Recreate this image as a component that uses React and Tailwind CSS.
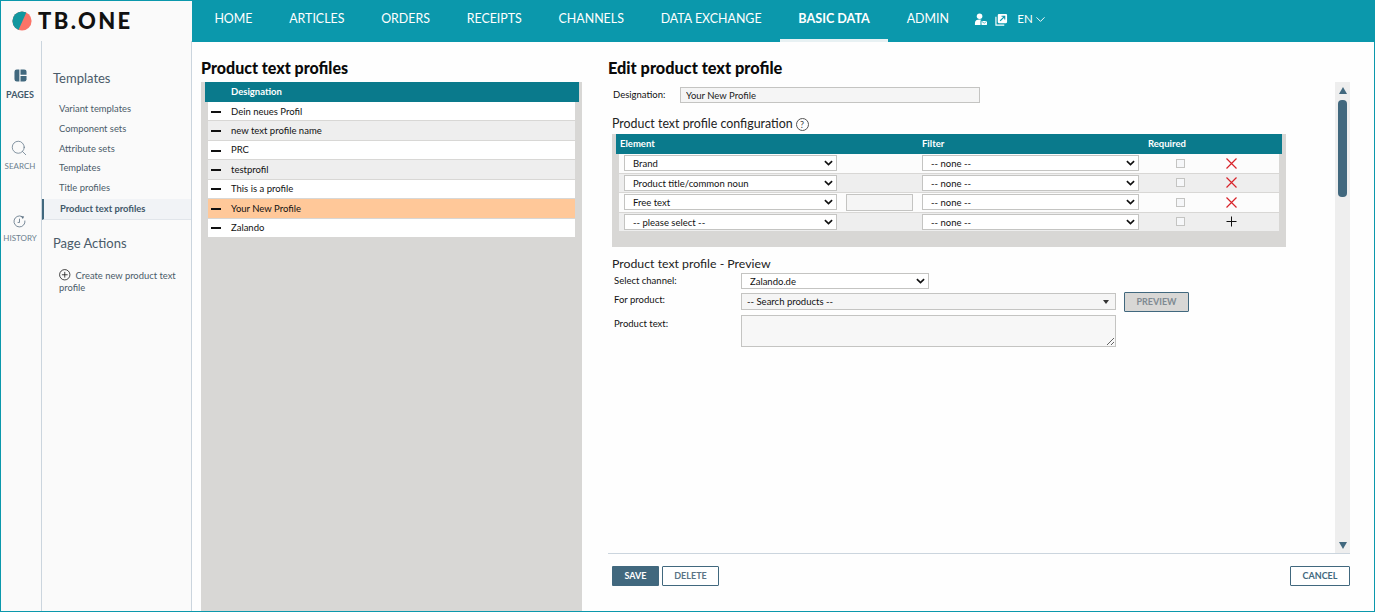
import React from "react";
import { Search, ChevronDown } from "lucide-react";

const FONT = "font-['Lato','Noto_Sans',sans-serif]";

function Chevron({ className = "" }) {
  return (
    <svg viewBox="0 0 12 8" className={"absolute pointer-events-none w-[9px] h-[6px] " + className}>
      <path d="M1.2 1.5 L6 6 L10.8 1.5" fill="none" stroke="#111" strokeWidth="2.2" />
    </svg>
  );
}

function Sel({ value, className = "", bg = "bg-white" }) {
  return (
    <div className={"relative " + className}>
      <select
        defaultValue={value}
        className={"block appearance-none w-full h-full border border-[#c4c4c2] outline-none pl-[8px] pr-4 pt-[1px] text-[9.5px] text-[#111] rounded-none " + bg + " " + FONT}
      >
        <option>{value}</option>
      </select>
      <Chevron className="right-[4px] top-[5px]" />
    </div>
  );
}

const navItems = ["HOME", "ARTICLES", "ORDERS", "RECEIPTS", "CHANNELS", "DATA EXCHANGE", "BASIC DATA", "ADMIN"];
const sideLinks = ["Variant templates", "Component sets", "Attribute sets", "Templates", "Title profiles"];
const profiles = ["Dein neues Profil", "new text profile name", "PRC", "testprofil", "This is a profile", "Your New Profile", "Zalando"];
const configRows = [
  { el: "Brand", act: "x" },
  { el: "Product title/common noun", act: "x" },
  { el: "Free text", act: "x", free: true },
  { el: "-- please select --", act: "plus" },
];

function Header() {
  return (
    <div className="flex h-[40px] shrink-0">
      <div className="w-[191px] shrink-0 bg-[#fafafa] border-b border-[#cbd5de] flex items-center pl-[11px] gap-[6px] h-[41px]">
        <svg viewBox="0 0 20 20" className="w-[20px] h-[20px]">
          <defs>
            <clipPath id="lc"><circle cx="10" cy="10" r="9.6" /></clipPath>
          </defs>
          <g clipPath="url(#lc)">
            <rect width="20" height="20" fill="#fb7468" />
            <path d="M0 0 H15 L6 20 H0 Z" fill="#12979f" />
          </g>
        </svg>
        <span className="text-[22px] leading-none font-black tracking-[2.4px] text-[#111] font-['Lato',sans-serif]">TB.ONE</span>
      </div>
      <nav className={"flex-1 bg-[#0b98ac] h-[41px] flex pl-[4px] text-white " + FONT}>
        {navItems.map((n) => {
          const active = n === "BASIC DATA";
          return (
            <div
              key={n}
              className={
                "px-[18.4px] flex items-center h-[41px] pb-[2px] border-b-[3px] " +
                (active ? "text-[12.6px] font-bold border-[#e8f1f3]" : "text-[12.4px] border-transparent")
              }
            >
              {n}
            </div>
          );
        })}
        <div className="flex items-center gap-[8px] ml-[7px] pb-[5px]">
          <svg viewBox="0 0 14 14" className="w-[13px] h-[13px]" fill="white">
            <circle cx="6" cy="3.5" r="3" />
            <path d="M1 11 C1 8 3 7 6 7 C7 7 8 7.3 8 7.5 L7 8 V13 H1 Z" />
            <rect x="8" y="8.5" width="6" height="4.5" rx="0.5" />
            <path d="M8.3 9 L11 11 L13.7 9" stroke="#0b98ac" strokeWidth="0.7" fill="none" />
          </svg>
          <svg viewBox="0 0 14 14" className="w-[13px] h-[13px]" fill="none" stroke="white">
            <rect x="3" y="1" width="10" height="10" rx="1.2" fill="white" stroke="none" />
            <path d="M1 4 V13 H10" strokeWidth="1.2" />
            <path d="M5.5 8.5 L10.5 3.5 M7 3.5 H10.5 V7" stroke="#0b98ac" strokeWidth="1.2" />
          </svg>
          <span className="text-[11.5px] flex items-center gap-[0px] ml-[1px]">
            EN <ChevronDown size={15} strokeWidth={1.5} />
          </span>
        </div>
      </nav>
    </div>
  );
}

function IconRail() {
  return (
    <div className={"w-[41px] shrink-0 bg-[#fafafa] border-r border-[#cbd5de] flex flex-col items-center pt-[28px] pr-[2px] " + FONT}>
      <svg viewBox="0 0 14 14" className="w-[13px] h-[13px]">
        <path d="M3 0.5 H5.8 V13.5 H3 A2.5 2.5 0 0 1 0.5 11 V3 A2.5 2.5 0 0 1 3 0.5 Z" fill="#41687e" />
        <path d="M7 0.5 H11 A2.5 2.5 0 0 1 13.5 3 V6.3 H7 Z" fill="#41687e" />
        <path d="M7 7.5 H13.5 V11 A2.5 2.5 0 0 1 11 13.5 H7 Z" fill="#41687e" />
      </svg>
      <span className="text-[9px] font-bold text-[#41586a] mt-[7px] leading-[11px]">PAGES</span>
      <Search size={18} strokeWidth={1} className="text-[#5f7485] mt-[39px] ml-[-2px]" />
      <span className="text-[8px] text-[#6b7f8e] mt-[4px] leading-[10px]">SEARCH</span>
      <svg viewBox="0 0 14 14" className="w-[13px] h-[13px] mt-[44px] ml-[-1px]" fill="none" stroke="#5f7485" strokeWidth="0.9">
        <path d="M9.5 1.6 A5.9 5.9 0 1 0 12.8 6" />
        <path d="M8.2 1 L12 1.6 L10.6 4.2" fill="#5f7485" stroke="none" />
        <path d="M7 4 V8 H5" />
      </svg>
      <span className="text-[8px] text-[#6b7f8e] mt-[5px] leading-[10px]">HISTORY</span>
    </div>
  );
}

function SideMenu() {
  return (
    <div className={"w-[150px] shrink-0 bg-[#fafafa] border-r border-[#cbd5de] pt-[28px] text-[#4a5b69] " + FONT}>
      <div className="pl-[11px] text-[13px] leading-[18px] mb-[12.4px]">Templates</div>
      {sideLinks.map((s) => (
        <div key={s} className="pl-[17px] text-[9.4px] h-[19.7px] leading-[19.7px]">{s}</div>
      ))}
      <div className="h-[21px] mt-[1.6px] border-l-2 border-[#41687e] border-b border-b-[#e1e5ea] bg-[#f1f3f6] pl-[16px] text-[9.4px] font-bold leading-[20px] text-[#41586a]">
        Product text profiles
      </div>
      <div className="pl-[11px] text-[13px] leading-[18px] mt-[14px]">Page Actions</div>
      <div className="pl-[17px] mt-[17px] text-[9.4px] leading-[12px] pr-[10px]">
        <svg viewBox="0 0 12 12" className="inline-block w-[11.5px] h-[11.5px] mr-[5px] align-[-2px]" fill="none" stroke="#111" strokeWidth="0.8">
          <circle cx="6" cy="6" r="5.4" />
          <path d="M6 3 V9 M3 6 H9" />
        </svg>
        Create new product text profile
      </div>
    </div>
  );
}

function ProfileList() {
  return (
    <div className="w-[381px] shrink-0 ml-[9px] flex flex-col">
      <h2 className="text-[16px] font-black leading-[20px] h-[41px] pt-[17px] text-[#0a0a0a]">Product text profiles</h2>
      <div className="flex-1 bg-[#d8d7d5] pl-[4px] pr-[3px]">
        <div className="h-[20px] bg-[#0a7a8c] text-white text-[9.5px] font-bold leading-[19px] pl-[26px]">Designation</div>
        <div className="pl-[3px] pr-[4px]">
          {profiles.map((p, i) => {
            const bg = p === "Your New Profile" ? "bg-[#ffc899]" : i % 2 ? "bg-[#eeeeee]" : "bg-white";
            return (
              <div key={p} className={"h-[19.45px] flex items-center pt-[1px] border-b border-[#d8d7d5] text-[9.5px] text-[#111] " + bg}>
                <span className="w-[10px] h-[2px] bg-[#111] ml-[3px] mr-[10px]" />
                {p}
              </div>
            );
          })}
        </div>
      </div>
    </div>
  );
}

function RowAction({ kind }) {
  return kind === "x" ? (
    <svg viewBox="0 0 11 11" className="w-[11px] h-[11px]" fill="none" stroke="#d8232a" strokeWidth="1.2">
      <path d="M0.5 0.5 L10.5 10.5 M10.5 0.5 L0.5 10.5" />
    </svg>
  ) : (
    <svg viewBox="0 0 11 11" className="w-[11px] h-[11px]" fill="none" stroke="#111" strokeWidth="1">
      <path d="M5.5 0.5 V10.5 M0.5 5.5 H10.5" />
    </svg>
  );
}

function ConfigTable() {
  return (
    <div className="ml-[4px] w-[674px] h-[113px] bg-[#d8d7d5] pl-[4px] pr-[4px]">
      <div className="h-[20px] bg-[#0a7a8c] text-white text-[9.5px] font-bold leading-[19px] grid grid-cols-[306px_226px_1fr]">
        <span className="pl-[4px]">Element</span>
        <span>Filter</span>
        <span>Required</span>
      </div>
      <div className="ml-[3px] mr-[3px]">
        {configRows.map((r, i) => (
          <div key={r.el} className={"h-[19.5px] flex items-center border-b border-[#d8d7d5] " + (i % 2 ? "bg-[#eeeeee]" : "bg-[#fcfcfc]")}>
            <Sel value={r.el} className="w-[213px] h-[16px] ml-[5px]" />
            <div className="w-[85px] shrink-0 flex justify-center">
              {r.free && <input readOnly className="w-[67px] h-[17px] ml-[-1px] border border-[#c4c4c2] bg-[#f5f5f5] outline-none" />}
            </div>
            <Sel value="-- none --" className="w-[217px] h-[16px]" />
            <span className="w-[9px] h-[9px] ml-[37px] border border-[#c4c4c2] bg-[#f6f7f9] shrink-0" />
            <span className="ml-[41px]">
              <RowAction kind={r.act} />
            </span>
          </div>
        ))}
      </div>
    </div>
  );
}

function EditPanel() {
  return (
    <div className="flex-1 ml-[26px] mr-[24px] flex flex-col min-w-0">
      <h2 className="text-[16.3px] font-black leading-[20px] h-[41px] pt-[17px] text-[#0a0a0a]">Edit product text profile</h2>
      <div className="h-[472px] border-b border-[#cbd5de] flex">
        <div className="flex-1 min-w-0">
          <div className="flex items-center mt-[5px] h-[16px] pl-[5px] text-[9.5px] text-[#111]">
            <span className="w-[67px]">Designation:</span>
            <input readOnly value="Your New Profile" className={"w-[300px] h-[16px] border border-[#c4c4c2] bg-[#f5f5f5] px-[5px] outline-none text-[9.5px] text-[#222] " + FONT} />
          </div>
          <div className="flex items-center pl-[4px] mt-[11px] h-[20px] text-[12.4px] text-[#222] gap-[3px]">
            Product text profile configuration
            <span className="w-[13px] h-[13px] rounded-full border border-[#555] text-[9px] leading-[11px] text-center text-[#444]">?</span>
          </div>
          <ConfigTable />
          <div className="pl-[4px] mt-[8px] text-[12.3px] leading-[17px] text-[#222]">Product text profile - Preview</div>
          <div className="pl-[6px] mt-[1px] text-[9.5px] text-[#111] grid grid-cols-[127px_375px_1fr] gap-y-[4px] items-start">
            <span className="leading-[15px]">Select channel:</span>
            <Sel value="Zalando.de" className="w-[188px] h-[16px]" />
            <span />
            <span className="leading-[14px]">For product:</span>
            <div className="relative h-[17px] border border-[#c4c4c2] bg-[#f5f5f5] pl-[5px] leading-[15px]">
              -- Search products --
              <span className="absolute right-[6px] top-[6px] border-x-[3px] border-x-transparent border-t-[4px] border-t-[#333]" />
            </div>
            <button className="w-[65px] h-[20px] ml-[8px] mt-[-1px] border border-[#41687e] bg-[#d8d7d5] text-[9px] font-bold text-[#7f8a92] rounded-[1px]">PREVIEW</button>
            <span className="leading-[14px] mt-[1px]">Product text:</span>
            <textarea readOnly className="h-[32px] w-full border border-[#c4c4c2] bg-[#f7f7f7] outline-none block mt-[-1px]" />
            <span />
          </div>
        </div>
        <div className="w-[15px] shrink-0 bg-[#eeeeee] relative flex flex-col items-center">
          <span className="mt-[5px] border-x-[4.5px] border-x-transparent border-b-[7px] border-b-[#41687e]" />
          <span className="mt-[6px] w-[9px] h-[97px] rounded-[4px] bg-[#41687e]" />
          <span className="absolute bottom-[4px] border-x-[4.5px] border-x-transparent border-t-[7px] border-t-[#41687e]" />
        </div>
      </div>
      <div className="flex items-start pt-[12px] pl-[4px] gap-[3px] text-[9px] font-bold">
        <button className="w-[47px] h-[20px] bg-[#41687e] text-white rounded-[1px]">SAVE</button>
        <button className="w-[57px] h-[20px] border border-[#41687e] bg-white text-[#5a7486] rounded-[1px]">DELETE</button>
        <button className="w-[60px] h-[20px] ml-auto border border-[#41687e] bg-white text-[#41687e] rounded-[1px]">CANCEL</button>
      </div>
    </div>
  );
}

export default function App() {
  return (
    <div className={"w-[1375px] h-[612px] overflow-hidden flex flex-col border border-[#0b98ac] bg-[#fefefe] " + FONT}>
      <Header />
      <div className="flex flex-1 min-h-0">
        <IconRail />
        <SideMenu />
        <ProfileList />
        <EditPanel />
      </div>
    </div>
  );
}
